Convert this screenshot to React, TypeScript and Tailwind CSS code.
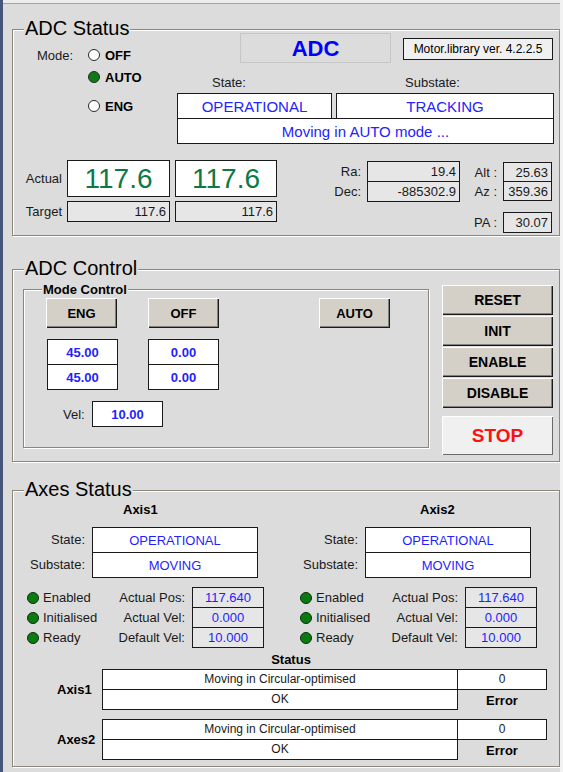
import React from "react";

const btn =
  "bg-[#d4d0c8] flex items-center justify-center font-bold text-[13px] text-black shadow-[inset_1px_1px_0_#ffffff,inset_-1px_-1px_0_#1a1a1a,inset_-2px_-2px_0_#808080]";
const ro = "bg-[#e6e6e6] border border-[#1a1a1a]";
const wbox = "bg-white border border-[#1a1a1a]";

function Group({ title, className, children }: { title: string; className?: string; children: React.ReactNode }) {
  return (
    <div
      className={`relative ml-[9px] w-[548px] border border-[#8c877a] shadow-[1px_1px_0_#ffffff,inset_1px_1px_0_#ffffff] ${className ?? ""}`}
    >
      <span className="absolute left-[11px] top-[-13px] bg-[#dcdcdc] px-[1px] text-[20px] leading-[23px] text-black">
        {title}
      </span>
      {children}
    </div>
  );
}

function Radio({ label, on }: { label: string; on?: boolean }) {
  return (
    <div className="flex h-[22px] items-center">
      <span
        className={`h-[12px] w-[12px] rounded-full border border-[#2a2a2a] ${on ? "bg-[#0d7a17]" : "bg-white"}`}
      />
      <span className="ml-[5px] font-bold text-[13px] text-black">{label}</span>
    </div>
  );
}

function Led({ label }: { label: string }) {
  return (
    <div className="flex items-center">
      <span className="h-[12px] w-[12px] rounded-full border border-[#0a300a] bg-[#0b7a10]" />
      <span className="ml-[4px] text-[13px]">{label}</span>
    </div>
  );
}

function AxisCol({ name, titleMl }: { name: string; titleMl: string }) {
  const rows = [
    ["Enabled", "Actual Pos:", "117.640"],
    ["Initialised", "Actual Vel:", "0.000"],
    ["Ready", "Default Vel:", "10.000"],
  ];
  return (
    <div className="w-[276px]">
      <div className={`mt-[11px] font-bold text-[13px] leading-[15px] text-black ${titleMl}`}>{name}</div>
      <div className="mt-[10px] flex">
        <div className="w-[72px] text-right text-[13px]">
          <div className="flex h-[25px] items-center justify-end">State:</div>
          <div className="flex h-[25px] items-center justify-end">Substate:</div>
        </div>
        <div className="ml-[7px] w-[166px]">
          <div className={`${wbox} flex h-[26px] items-center justify-center text-[13px] text-[#1f1fff]`}>OPERATIONAL</div>
          <div className={`${wbox} -mt-[1px] flex h-[26px] items-center justify-center text-[13px] text-[#1f1fff]`}>MOVING</div>
        </div>
      </div>
      <div className="mt-[9px]">
        {rows.map(([a, b, c], i) => (
          <div key={a} className={`flex h-[21px] items-center ${i > 0 ? "-mt-[1px]" : ""}`}>
            <div className="w-[104px] pl-[14px]">
              <Led label={a} />
            </div>
            <div className="w-[68px] text-right text-[13px]">{b}</div>
            <div className={`${ro} ml-[7px] flex h-[21px] w-[72px] items-center justify-center text-[13px] text-[#1f1fff]`}>
              {c}
            </div>
          </div>
        ))}
      </div>
    </div>
  );
}

function StatusGroup({ label, className }: { label: string; className?: string }) {
  return (
    <div className={`flex h-[41px] items-center ${className ?? ""}`}>
      <div className="w-[89px] pl-[44px] font-bold text-[13px] text-black">{label}</div>
      <div className="w-[356px]">
        <div className={`${wbox} flex h-[21px] items-center justify-center text-[12px]`}>Moving in Circular-optimised</div>
        <div className={`${wbox} -mt-[1px] flex h-[21px] items-center justify-center text-[12px]`}>OK</div>
      </div>
      <div className="-ml-[1px] flex h-[41px] w-[90px] flex-col">
        <div className={`${wbox} flex h-[21px] items-center justify-center text-[12px]`}>0</div>
        <div className="flex flex-1 items-center justify-center font-bold text-[13px] text-black">Error</div>
      </div>
    </div>
  );
}

export default function App() {
  return (
    <div className="flex h-[772px] w-[563px] flex-col overflow-hidden border-l-[3px] border-r-[3px] border-l-[#46557a] border-r-[#f2f2f2] bg-[#dcdcdc] font-['Liberation_Sans',Arial,sans-serif] text-[13px] leading-[15px] text-[#1a1a1a]">
      <div className="h-[4px] border-b border-[#a4a4a4] bg-[#ededed]" />

      {/* ADC Status */}
      <Group title="ADC Status" className="mt-[25px] h-[207px]">
        <div className="flex items-start">
          <div className="flex w-[164px] pl-[24px] pt-[14px]">
            <div className="flex h-[22px] w-[51px] items-center text-[13px]">Mode:</div>
            <div>
              <Radio label="OFF" />
              <Radio label="AUTO" on />
              <div className="mt-[7px]">
                <Radio label="ENG" />
              </div>
            </div>
          </div>
          <div className="w-[377px]">
            <div className="mt-[3px] flex items-start">
              <div className="ml-[63px] flex h-[30px] w-[151px] items-center justify-center border border-[#c6c6c6] text-[22px] font-bold text-[#0000ff]">
                ADC
              </div>
              <div className="ml-[12px] mt-[5px] flex h-[22px] w-[150px] items-center justify-center border border-[#1a1a1a] bg-[#f0f0f0] text-[12px] text-black">
                Motor.library ver. 4.2.2.5
              </div>
            </div>
            <div className="flex h-[30px] pt-[12px] text-[13px]">
              <span className="w-[228px] pl-[35px]">State:</span>
              <span>Substate:</span>
            </div>
            <div className="flex gap-[4px]">
              <div className={`${wbox} flex h-[26px] w-[155px] items-center justify-center text-[15px] text-[#2323ff]`}>OPERATIONAL</div>
              <div className={`${wbox} flex h-[26px] w-[218px] items-center justify-center text-[15px] text-[#2323ff]`}>TRACKING</div>
            </div>
            <div className={`${wbox} -mt-[1px] flex h-[26px] w-[377px] items-center justify-center text-[15px] text-[#2323ff]`}>
              Moving in AUTO mode ...
            </div>
          </div>
        </div>

        <div className="mt-[16px] flex items-start">
          <div>
            <div className="flex items-center">
              <div className="w-[54px] pr-[5px] text-right text-[13px]">Actual</div>
              <div className={`${wbox} flex h-[37px] w-[103px] items-center justify-center text-[28px] text-[#0c7a45]`}>117.6</div>
              <div className={`${wbox} ml-[5px] flex h-[37px] w-[102px] items-center justify-center text-[28px] text-[#0c7a45]`}>117.6</div>
            </div>
            <div className="mt-[4px] flex items-center">
              <div className="w-[54px] pr-[5px] text-right text-[13px]">Target</div>
              <div className={`${ro} flex h-[21px] w-[103px] items-center justify-end pr-[3px] text-[13px]`}>117.6</div>
              <div className={`${ro} ml-[5px] flex h-[21px] w-[102px] items-center justify-end pr-[3px] text-[13px]`}>117.6</div>
            </div>
          </div>

          <div className="ml-[23px] mt-[1px]">
            <div className="flex items-center">
              <div className="w-[61px] text-right text-[13px]">Ra:</div>
              <div className={`${ro} ml-[6px] flex h-[21px] w-[93px] items-center justify-end pr-[3px] text-[13px]`}>19.4</div>
            </div>
            <div className="-mt-[1px] flex items-center">
              <div className="w-[61px] text-right text-[13px]">Dec:</div>
              <div className={`${ro} ml-[6px] flex h-[21px] w-[93px] items-center justify-end pr-[3px] text-[13px]`}>-885302.9</div>
            </div>
          </div>

          <div className="mt-[2px]">
            <div className="flex items-center">
              <div className="w-[37px] text-right text-[13px]">Alt :</div>
              <div className={`${ro} ml-[6px] flex h-[20px] w-[49px] items-center justify-end pr-[3px] text-[13px]`}>25.63</div>
            </div>
            <div className="-mt-[1px] flex items-center">
              <div className="w-[37px] text-right text-[13px]">Az :</div>
              <div className={`${ro} ml-[6px] flex h-[20px] w-[49px] items-center justify-end pr-[3px] text-[13px]`}>359.36</div>
            </div>
            <div className="mt-[11px] flex items-center">
              <div className="w-[37px] text-right text-[13px]">PA :</div>
              <div className={`${ro} ml-[6px] flex h-[21px] w-[49px] items-center justify-end pr-[3px] text-[13px]`}>30.07</div>
            </div>
          </div>
        </div>
      </Group>

      {/* ADC Control */}
      <Group title="ADC Control" className="mt-[33px] h-[193px]">
        <div className="flex items-start">
          <div className="relative ml-[10px] mt-[19px] h-[159px] w-[406px] border border-[#8c877a] shadow-[1px_1px_0_#ffffff,inset_1px_1px_0_#ffffff]">
            <span className="absolute left-[18px] top-[-8px] bg-[#dcdcdc] px-[1px] font-bold text-[13px] leading-[15px] text-black">
              Mode Control
            </span>
            <div className="mt-[8px] flex pl-[22px]">
              <div className={`${btn} h-[30px] w-[71px]`}>ENG</div>
              <div className={`${btn} ml-[31px] h-[30px] w-[71px]`}>OFF</div>
              <div className={`${btn} ml-[100px] h-[30px] w-[71px]`}>AUTO</div>
            </div>
            <div className="mt-[11px] flex pl-[23px]">
              <div className="w-[71px]">
                <div className={`${wbox} flex h-[26px] items-center justify-center font-bold text-[13px] text-[#1f1fff]`}>45.00</div>
                <div className={`${wbox} -mt-[1px] flex h-[26px] items-center justify-center font-bold text-[13px] text-[#1f1fff]`}>45.00</div>
              </div>
              <div className="ml-[30px] w-[71px]">
                <div className={`${wbox} flex h-[26px] items-center justify-center font-bold text-[13px] text-[#1f1fff]`}>0.00</div>
                <div className={`${wbox} -mt-[1px] flex h-[26px] items-center justify-center font-bold text-[13px] text-[#1f1fff]`}>0.00</div>
              </div>
            </div>
            <div className="mt-[11px] flex items-center pl-[39px]">
              <span className="w-[23px] text-[13px]">Vel:</span>
              <div className={`${wbox} ml-[6px] flex h-[26px] w-[71px] items-center justify-center font-bold text-[13px] text-[#1f1fff]`}>
                10.00
              </div>
            </div>
          </div>

          <div className="ml-[13px] mt-[15px] flex w-[111px] flex-col gap-[1px]">
            <div className={`${btn} h-[30px] text-[14px]`}>RESET</div>
            <div className={`${btn} h-[30px] text-[14px]`}>INIT</div>
            <div className={`${btn} h-[30px] text-[14px]`}>ENABLE</div>
            <div className={`${btn} h-[30px] text-[14px]`}>DISABLE</div>
            <div className="mt-[7px] flex h-[39px] items-center justify-center bg-[#f0f0f0] text-[19px] font-bold text-[#ff1010] shadow-[inset_1px_1px_0_#ffffff,inset_-1px_-1px_0_#6a6a6a]">
              STOP
            </div>
          </div>
        </div>
      </Group>

      {/* Axes Status */}
      <Group title="Axes Status" className="mt-[28px] h-[277px]">
        <div className="flex">
          <AxisCol name="Axis1" titleMl="ml-[110px]" />
          <AxisCol name="Axis2" titleMl="ml-[134px]" />
        </div>
        <div className="mt-[4px] pl-[10px] text-center font-bold text-[13px] leading-[15px] text-black">Status</div>
        <StatusGroup label="Axis1" className="mt-[2px]" />
        <StatusGroup label="Axes2" className="mt-[9px]" />
      </Group>
    </div>
  );
}
